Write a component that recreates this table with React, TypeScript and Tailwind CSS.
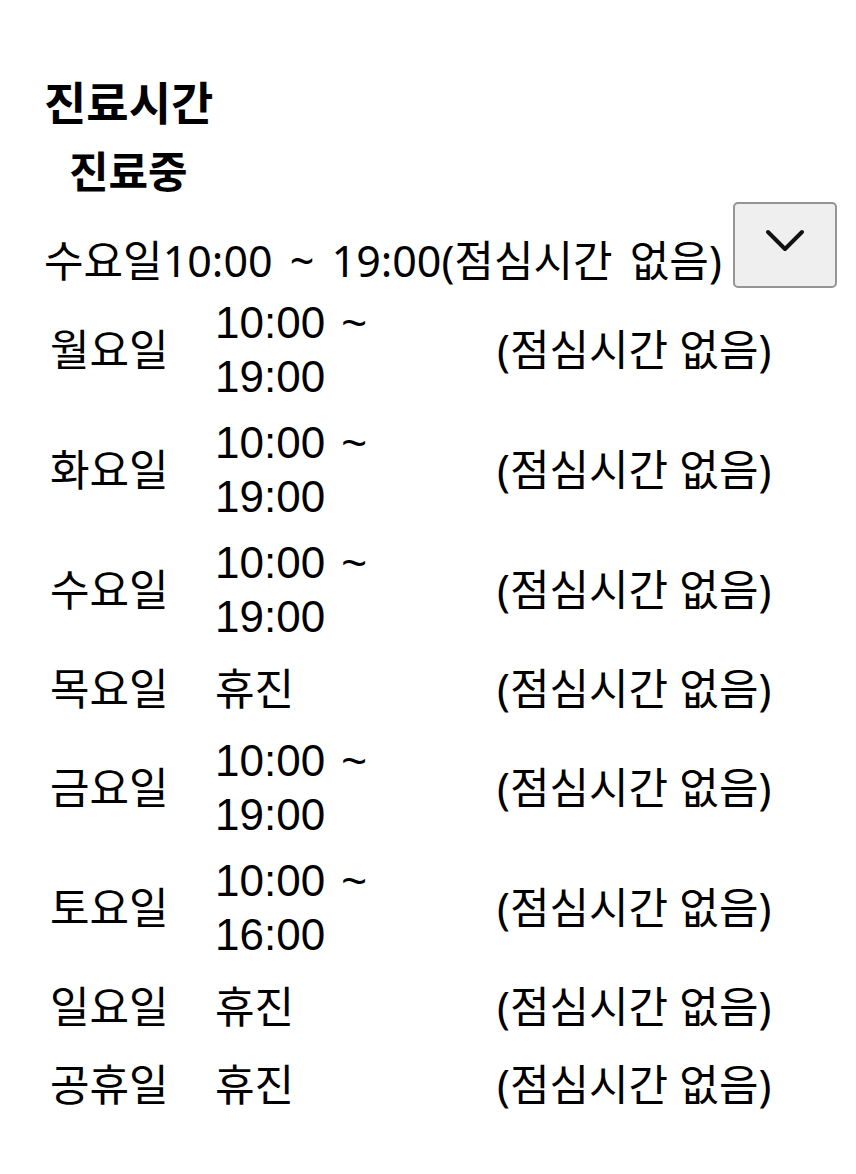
import { useState } from "react";

type Hours = {
  day: string;
  open?: string;
  close?: string;
};

const hours: Hours[] = [
  { day: "월요일", open: "10:00", close: "19:00" },
  { day: "화요일", open: "10:00", close: "19:00" },
  { day: "수요일", open: "10:00", close: "19:00" },
  { day: "목요일" },
  { day: "금요일", open: "10:00", close: "19:00" },
  { day: "토요일", open: "10:00", close: "16:00" },
  { day: "일요일" },
  { day: "공휴일" },
];

const font = { fontFamily: '"Noto Sans", "Noto Sans CJK KR", sans-serif' };
const timeFont = { fontFamily: '"Liberation Sans", "Noto Sans CJK KR", sans-serif' };

const App = () => {
  const [open, setOpen] = useState(true);

  return (
    <div className="min-h-screen bg-white text-black" style={font}>
      <div className="flex flex-col pt-[74px] pl-[44px]">
        <h2 className="text-[46px] font-bold leading-[56px]">진료시간</h2>
        <h3 className="mt-[17px] pl-[25px] text-[43px] font-bold leading-[50px]">진료중</h3>

        <div className="mt-[5px] flex items-end">
          <p className="text-[43px] leading-[54px] whitespace-nowrap [word-spacing:6px]">수요일10:00 ~ 19:00(점심시간 없음)</p>
          <button
            type="button"
            onClick={() => setOpen(!open)}
            className="ml-[11px] flex h-[86px] w-[104px] items-start justify-center rounded-[5px] border-2 border-[#959595] bg-[#efefef] pt-[25px]"
          >
            <svg width="40" height="24" viewBox="0 0 40 24" fill="none" className={open ? "" : "rotate-180"}>
              <path d="M3 3 L20 20 L37 3" stroke="#111" strokeWidth="4" strokeLinecap="round" strokeLinejoin="round" />
            </svg>
          </button>
        </div>

        {open && (
          <div className="mt-[2px] flex flex-col pl-[6px] text-[43px]">
            {hours.map((h) => (
              <div key={h.day} className={`grid grid-cols-[165px_282px_auto] items-center ${h.open ? "h-[120px]" : "h-[78px]"}`}>
                <span className="leading-[52px]">{h.day}</span>
                {h.open ? (
                  <span className="w-[165px] text-[44px] leading-[54px] [word-spacing:4px]" style={timeFont}>
                    {h.open} ~ {h.close}
                  </span>
                ) : (
                  <span className="leading-[52px]">휴진</span>
                )}
                <span className="leading-[52px] whitespace-nowrap">(점심시간 없음)</span>
              </div>
            ))}
          </div>
        )}
      </div>
    </div>
  );
};

export default App;
